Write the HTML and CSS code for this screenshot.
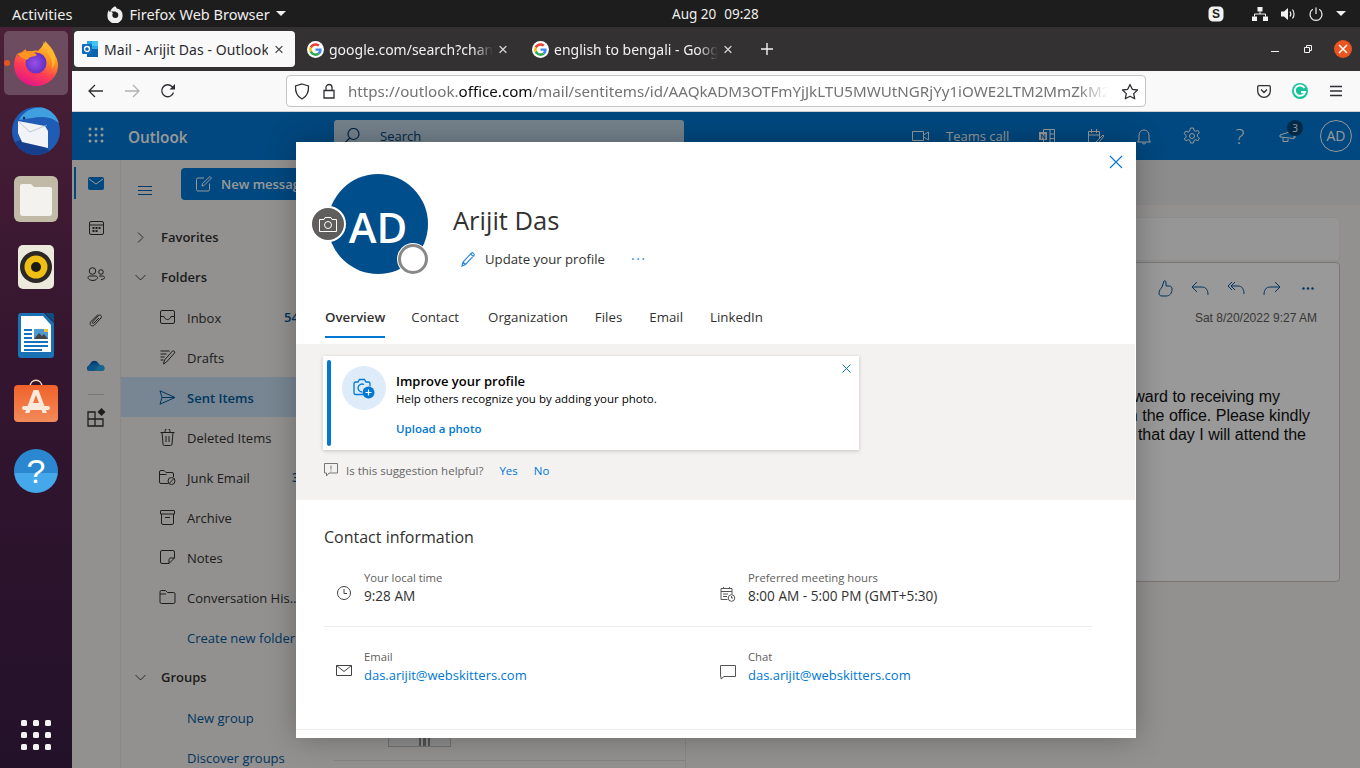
FILE: index.html
```html
<!DOCTYPE html>
<html lang="en">
<head>
<meta charset="utf-8">
<title>Mail - Arijit Das - Outlook</title>
<link rel="stylesheet" href="styles.css">
</head>
<body>
<svg class="defs" width="0" height="0" aria-hidden="true">
  <symbol id="google" viewBox="-8 -8 64 64">
    <circle cx="24" cy="24" r="32" fill="#fff"/>
    <path fill="#EA4335" d="M24 9.5c3.54 0 6.71 1.22 9.21 3.6l6.85-6.85C35.9 2.38 30.47 0 24 0 14.62 0 6.51 5.38 2.56 13.22l7.98 6.19C12.43 13.72 17.74 9.5 24 9.5z"/>
    <path fill="#4285F4" d="M46.98 24.55c0-1.57-.15-3.09-.38-4.55H24v9.02h12.94c-.58 2.96-2.26 5.48-4.78 7.18l7.73 6c4.51-4.18 7.09-10.36 7.09-17.65z"/>
    <path fill="#FBBC05" d="M10.53 28.59c-.48-1.45-.76-2.99-.76-4.59s.27-3.14.76-4.59l-7.98-6.19C.92 16.46 0 20.12 0 24c0 3.88.92 7.54 2.56 10.78l7.97-6.19z"/>
    <path fill="#34A853" d="M24 48c6.48 0 11.93-2.13 15.89-5.81l-7.73-6c-2.15 1.45-4.92 2.3-8.16 2.3-6.26 0-11.57-4.22-13.47-9.91l-7.98 6.19C6.51 42.62 14.62 48 24 48z"/>
  </symbol>
</svg>

<header class="topbar">
  <div class="top-left">
    <span>Activities</span>
    <span class="app-menu">
      <svg width="18" height="18" viewBox="0 0 18 18"><path fill="#eee" d="M9 1.2c1 .7 1.5 1.4 1.7 2.300 2.800.3 5.800 2.600 5.800 6.200a7.600 7.600 0 1 1-15 0c0-2 .6-3.600 1.500-4.700 0 1 .4 1.800 1.100 2.300C4.700 4.400 6.800 2.300 9 1.200z"/><circle cx="9.300" cy="10" r="3" fill="#1d1d1d"/><path fill="#1d1d1d" d="M5 6.500h5l-2 2.500z"/></svg>
      Firefox Web Browser
      <i class="caret"></i>
    </span>
  </div>
  <div class="clock"><span>Aug 20</span><span>09:28</span></div>
  <div class="tray">
    <svg width="16" height="16" viewBox="0 0 16 16"><path fill="#f2f2f2" d="M5 .5h6a4.500 4.500 0 0 1 4.500 4.500v6a4.500 4.500 0 0 1-4.500 4.500H5A4.500 4.500 0 0 1 .5 11V5A4.500 4.500 0 0 1 5 .5z"/><text x="8" y="12" text-anchor="middle" class="skype-s">S</text></svg>
    <svg class="tray-gap" width="16" height="14" viewBox="0 0 16 14"><path fill="#f2f2f2" d="M5.500 0h5v4.500h-5zM0 9.500h5V14H0zM11 9.500h5V14h-5z"/><path stroke="#f2f2f2" fill="none" d="M8 4.500v2.500M2.500 9.500V7h11v2.500"/></svg>
    <svg width="15" height="14" viewBox="0 0 15 14"><path fill="#f2f2f2" d="M0 4.500h3L7 1v12L3 9.500H0z"/><path stroke="#f2f2f2" fill="none" stroke-width="1.200" d="M9 4.500c1 1.500 1 3.500 0 5M11.500 2.500c2 2.500 2 6.500 0 9"/></svg>
    <svg width="14" height="14" viewBox="0 0 14 14"><path stroke="#f2f2f2" fill="none" stroke-width="1.200" d="M7 .5v6.500M3.800 2.300a6 6 0 1 0 6.400 0"/></svg>
    <i class="caret"></i>
  </div>
</header>

<div class="desktop">
  <nav class="dock">
    <div class="dock-item active">
      <i class="run-dot"></i>
      <svg width="48" height="48" viewBox="0 0 48 48">
        <defs>
          <linearGradient id="fx1" x1="0.800" y1="0" x2="0.350" y2="1"><stop offset="0" stop-color="#ffd53a"/><stop offset=".4" stop-color="#ff8a1f"/><stop offset=".68" stop-color="#ff3c55"/><stop offset="1" stop-color="#e31587"/></linearGradient>
          <radialGradient id="fx2" cx=".45" cy=".5" r=".6"><stop offset="0" stop-color="#9950e8"/><stop offset="1" stop-color="#5a2bbd"/></radialGradient>
        </defs>
        <path fill="url(#fx1)" d="M32 1c-.5 4 3 6 6 9 5 5 8 10 8 16 0 12-10 21-22 21S2 38 2 26c0-5 1.500-8 3-11l2 3c1-3 3-6 7-8 0 2 .5 3 1 4 4-2 8-3 11-2 3-3 6-6 6-11z"/>
        <circle cx="24" cy="24" r="10.500" fill="url(#fx2)"/>
        <path fill="#ffb52e" d="M33 2c4 4 8 8 10 14 1 5 0 10-3 14 1-6-1-12-4-16-2-3-4-6-3-12z"/>
        <path fill="#ff9420" d="M5 15c3-1 7-3 12-3 3 0 6 2 8 4-2 2-6 1-8 3l-2 2c-3-1-7-3-10-6z"/>
      </svg>
    </div>
    <div class="dock-item">
      <svg width="50" height="50" viewBox="0 0 50 50">
        <circle cx="25" cy="25" r="24" fill="#1f5cb5"/>
        <path fill="#3f9fe0" d="M8 14C12 5 24 0 33 2c7 2 13 8 15 15-5-4-10-6-16-6-9 0-16 2-24 3z"/>
        <path fill="#153f8c" d="M4 36c3 6 8 10 14 12 8 2 15 0 21-3l-8-6-19-6z"/>
        <path fill="#f1f3f7" d="M7 15l27 5 3 5v17L11 36l-4-9z"/>
        <path fill="none" stroke="#aab4c4" stroke-width=".700" d="M7 15l12 11 17-7"/>
        <circle cx="13" cy="12" r="1.200" fill="#0d2b5e"/>
      </svg>
    </div>
    <div class="dock-item">
      <svg width="44" height="46" viewBox="0 0 44 46">
        <rect width="44" height="46" rx="6" fill="#c1baa7"/>
        <path fill="#f4f2ee" d="M6 10a2 2 0 0 1 2-2h9l3 3h16a2 2 0 0 1 2 2v24a3 3 0 0 1-3 3H9a3 3 0 0 1-3-3z"/>
      </svg>
    </div>
    <div class="dock-item">
      <svg width="36" height="44" viewBox="0 0 36 44">
        <rect width="36" height="44" rx="5" fill="#ece9dd"/>
        <circle cx="18" cy="22" r="16" fill="#2b2925"/>
        <circle cx="18" cy="22" r="11.500" fill="#efbf16"/>
        <circle cx="18" cy="22" r="5" fill="#1b1a17"/>
      </svg>
    </div>
    <div class="dock-item">
      <svg width="36" height="45" viewBox="0 0 36 45">
        <path fill="#1a71b3" d="M3 0h23l10 10v32a3 3 0 0 1-3 3H3a3 3 0 0 1-3-3V3a3 3 0 0 1 3-3z"/>
        <path fill="#0d4f80" d="M27 0h7a2 2 0 0 1 2 2v7z"/>
        <path fill="#fff" d="M3 3h22l8 9v27H3z"/>
        <path fill="#1473ba" d="M6 16h8v2H6zM6 20h8v2H6zM6 24h8v2H6zM6 28h24v2H6zM6 32h24v2H6zM6 36h18v2H6z"/>
        <rect x="16" y="16" width="14" height="10" fill="#4d9bd0"/>
        <path fill="#444" d="M16 26l5-6 3 3 2-2 4 5z"/>
        <rect x="26" y="16" width="4" height="3" fill="#f4c430"/>
      </svg>
    </div>
    <div class="dock-item">
      <svg class="bag-icon" width="44" height="44" viewBox="0 2 44 44">
        <defs><linearGradient id="bag" x1="0" y1="0" x2="0" y2="1"><stop offset="0" stop-color="#f0622a"/><stop offset="1" stop-color="#f28a5a"/></linearGradient></defs>
        <path fill="none" stroke="#f3d9bd" stroke-width="1.500" d="M16 8c0-9 12-9 12 0"/>
        <rect y="6" width="44" height="37" rx="4" fill="url(#bag)"/>
        <path fill="#fbe9dc" d="M19.500 11h5L33 34h-4.500l-2-6h-9l-2 6H11zM19 24h6l-3-8z"/>
        <rect x="8" y="27" width="28" height="4" rx="2" fill="#fbe9dc"/>
      </svg>
    </div>
    <div class="dock-item">
      <div class="help-ball">?</div>
    </div>
    <div class="show-apps">
      <i></i><i></i><i></i><i></i><i></i><i></i><i></i><i></i><i></i>
    </div>
  </nav>

  <main class="browser">
    <div class="tabstrip">
      <div class="tab current">
        <svg width="16" height="16" viewBox="0 0 16 16"><rect x="5" y="0" width="11" height="16" fill="#28a8ea"/><rect x="5" y="8" width="11" height="8" fill="#0a64ad"/><rect x="10" y="0" width="6" height="5" fill="#50d9ff" opacity=".6"/><rect x="0" y="3" width="10" height="10" rx="1" fill="#0f6cbd"/><circle cx="5" cy="8" r="2.500" fill="none" stroke="#fff" stroke-width="1.300"/></svg>
        <span class="tab-label">Mail - Arijit Das - Outlook</span>
        <span class="tab-x">×</span>
      </div>
      <div class="tab">
        <svg width="17" height="17"><use href="#google"/></svg>
        <span class="tab-label fade">google.com/search?channel=fs</span>
        <span class="tab-x">×</span>
      </div>
      <div class="tab">
        <svg width="17" height="17"><use href="#google"/></svg>
        <span class="tab-label fade">english to bengali - Google Search</span>
        <span class="tab-x">×</span>
      </div>
      <svg class="new-tab" width="14" height="14" viewBox="0 0 14 14"><path stroke="#f2f2f2" stroke-width="1.400" d="M7 1v12M1 7h12"/></svg>
      <div class="win-controls">
        <i class="win-min"></i>
        <svg width="8" height="8" viewBox="0 0 8 8"><path fill="none" stroke="#f2f2f2" d="M.5 2.500h5v5h-5zM2.500 2.500v-2h5v5h-2"/></svg>
        <span class="win-close"><svg width="10" height="10" viewBox="0 0 10 10"><path stroke="#fff" stroke-width="1.500" d="M1 1l8 8M9 1l-8 8"/></svg></span>
      </div>
    </div>

    <div class="toolbar">
      <div class="nav-buttons">
        <svg width="16" height="14" viewBox="0 0 16 14"><path fill="none" stroke="#2f2f33" stroke-width="1.300" d="M15 7H1M7 1L1 7l6 6"/></svg>
        <svg width="16" height="14" viewBox="0 0 16 14"><path fill="none" stroke="#b1b1b3" stroke-width="1.300" d="M1 7h14M9 1l6 6-6 6"/></svg>
        <svg width="16" height="16" viewBox="0 0 16 16"><path fill="none" stroke="#2f2f33" stroke-width="1.300" d="M13.500 9.500A6 6 0 1 1 12 3.500l2 2"/><path fill="#2f2f33" d="M15 1v5.500H9.500z"/></svg>
      </div>
      <div class="urlbar">
        <svg width="16" height="17" viewBox="0 0 16 17"><path fill="none" stroke="#2f2f33" stroke-width="1.300" d="M8 1l6.500 2c.3 6-1.500 10.500-6.500 13C3 13.500 1.200 9 1.500 3z"/></svg>
        <svg width="12" height="16" viewBox="0 0 12 16"><path fill="none" stroke="#2f2f33" stroke-width="1.300" d="M1 7.500h10v7.500H1zM3 7.500V4.500a3 3 0 0 1 6 0v3"/></svg>
        <span class="url"><span class="url-dim">https://outlook.</span>office.com<span class="url-dim">/mail/sentitems/id/AAQkADM3OTFmYjJkLTU5MWUtNGRjYy1iOWE2LTM2MmZkM2Q5ZjM2NgAQ</span></span>
        <svg width="18" height="17" viewBox="0 0 18 17"><path fill="none" stroke="#2f2f33" stroke-width="1.300" stroke-linejoin="round" d="M9 1.500l2.300 4.800 5.200.7-3.800 3.600 1 5.200L9 13.200l-4.700 2.600 1-5.200L1.500 7l5.200-.7z"/></svg>
      </div>
      <div class="tool-icons">
        <svg width="14" height="13" viewBox="0 0 14 13"><path fill="none" stroke="#2f2f33" stroke-width="1.300" d="M2 .7h10A1.300 1.300 0 0 1 13.300 2v4a6.300 6.300 0 0 1-12.600 0V2A1.300 1.300 0 0 1 2 .7zM4 4.500L7 7.500l3-3"/></svg>
        <span class="grammarly"><svg width="16" height="16" viewBox="0 0 16 16"><path fill="none" stroke="#fff" stroke-width="2" d="M12.500 5A5.200 5.200 0 1 0 13 9H9"/></svg></span>
        <svg width="14" height="12" viewBox="0 0 14 12"><path stroke="#2f2f33" stroke-width="1.300" d="M1 1.500h12M1 6h12M1 10.500h12"/></svg>
      </div>
    </div>

    <div class="page">
      <div class="o-header">
        <div class="o-brand">
          <svg class="o-waffle" width="16" height="16" viewBox="0 0 16 16"><g fill="#fff"><circle cx="2" cy="2" r="1.500"/><circle cx="8" cy="2" r="1.500"/><circle cx="14" cy="2" r="1.500"/><circle cx="2" cy="8" r="1.500"/><circle cx="8" cy="8" r="1.500"/><circle cx="14" cy="8" r="1.500"/><circle cx="2" cy="14" r="1.500"/><circle cx="8" cy="14" r="1.500"/><circle cx="14" cy="14" r="1.500"/></g></svg>
          <span class="o-name">Outlook</span>
        </div>
        <div class="o-search">
          <svg width="16" height="16" viewBox="0 0 16 16"><path fill="none" stroke="#003a6c" stroke-width="1.200" d="M1 15l5-5.500M15 6a5.500 5.500 0 1 1-11 0 5.500 5.500 0 0 1 11 0z"/></svg>
          <span>Search</span>
        </div>
        <div class="o-actions">
          <svg class="o-teams" width="17" height="10" viewBox="0 0 17 10"><path fill="none" stroke="#fff" d="M.5.500h11v9H.5zM11.500 4l5-3v8l-5-3"/></svg>
          <span class="o-teams-label">Teams call</span>
          <svg class="o-ic" width="18" height="17" viewBox="0 0 18 17"><path fill="none" stroke="#fff" d="M4.500 1.500h11v14h-11zM11 1.500v14M11 6h4.500M11 10.500h4.500"/><rect y="4" width="8" height="8" fill="#fff"/><text x="4" y="11" text-anchor="middle" class="note-n">N</text></svg>
          <svg class="o-ic" width="18" height="17" viewBox="0 0 18 17"><path fill="none" stroke="#fff" d="M1.500 3.500h11v7M8 14.500H1.500zM1.500 3.500v11M1.500 7h11M4.500 1v4M9.500 1v4M9 14l7-7 1 1-6 7.500-3 .5z"/></svg>
          <svg class="o-ic" width="18" height="17" viewBox="0 0 18 17"><path fill="none" stroke="#fff" d="M4 12V7a5 5 0 0 1 10 0v5l1.500 2h-13zM7.500 14.500a1.500 1.500 0 0 0 3 0"/></svg>
          <svg class="o-ic" width="18" height="18" viewBox="0 0 18 18"><path fill="none" stroke="#fff" d="M7.500 1h3l.5 2.500 1.500.8 2.400-1 1.500 2.600-2 1.600v2l2 1.600-1.500 2.600-2.400-1-1.500.8-.5 2.500h-3l-.5-2.500-1.500-.8-2.400 1L1.100 11.900l2-1.600v-2l-2-1.600 1.500-2.600 2.400 1 1.500-.8z"/><circle cx="9" cy="9" r="2.500" fill="none" stroke="#fff"/></svg>
          <span class="o-ic o-q">?</span>
          <span class="o-ic o-mega">
            <svg width="17" height="13" viewBox="0 0 17 13"><path fill="none" stroke="#fff" d="M1 5l14-4.500v8L1 7zM4 7.500v4h5V9"/><path stroke="#fff" d="M16 1v7"/></svg>
            <b class="o-badge">3</b>
          </span>
          <span class="o-avatar">AD</span>
        </div>
      </div>

      <div class="o-body">
        <aside class="o-rail">
          <span class="rail-item on">
            <svg width="16" height="13" viewBox="0 0 16 13"><rect width="16" height="13" rx="2" fill="#0078d4"/><path fill="none" stroke="#fff" d="M1 2l7 5 7-5"/></svg>
          </span>
          <span class="rail-item">
            <svg width="15" height="14" viewBox="0 0 15 14"><path fill="none" stroke="#323130" d="M2 .5h11A1.500 1.500 0 0 1 14.500 2v10a1.500 1.500 0 0 1-1.500 1.500H2A1.500 1.500 0 0 1 .5 12V2A1.500 1.500 0 0 1 2 .5zM.5 4h14"/><path fill="#323130" d="M3.500 6h2v2h-2zM6.500 6h2v2h-2zM9.500 6h2v2h-2zM3.500 9h2v2h-2zM6.500 9h2v2h-2z"/></svg>
          </span>
          <span class="rail-item">
            <svg width="18" height="14" viewBox="0 0 18 14"><circle cx="5.500" cy="4" r="3.300" fill="none" stroke="#323130"/><circle cx="14" cy="5" r="2.300" fill="none" stroke="#323130"/><path fill="none" stroke="#323130" d="M1 10.500c0-1 1-1.500 2-1.500h5c1 0 2.500.5 2.500 1.500S9 13.500 6 13.500 1 12 1 10.500zM12 9h3.500c1 0 2 .5 2 1.500s-1 2-3.500 2"/></svg>
          </span>
          <span class="rail-item">
            <svg width="14" height="15" viewBox="0 0 14 15"><path fill="none" stroke="#323130" d="M9 1.500L2 8.500c-2.500 3 1 6 3.500 3.500l6.500-7c1.500-2-1-4-2.500-2.500L3.500 9c-.7 1 .5 2 1.500 1L10 5"/></svg>
          </span>
          <span class="rail-item">
            <svg width="18" height="12" viewBox="0 0 18 12"><path fill="#0364b8" d="M3 5a4.500 4.500 0 0 1 8-2.500L8 8 1 11C-.5 9-.5 6 3 5z"/><path fill="#0f78d4" d="M6 3.500a5 5 0 0 1 7 1.500c-3 0-5 2-5 3L2 5c1-1 2.500-1.500 4-1.500z"/><path fill="#1490df" d="M7 5.500c3-2 7-1 7.500 1L9 11H3.500C.5 11 0 8 1.500 6.500 3.500 5 5.500 5 7 5.500z"/><path fill="#28a8ea" d="M14 5a3.200 3.200 0 0 1 2 6H7c3-2 4-6 7-6z"/></svg>
          </span>
          <i class="rail-rule"></i>
          <span class="rail-item apps">
            <svg width="19" height="19" viewBox="0 0 19 19"><path fill="none" stroke="#323130" stroke-width="1.300" d="M1 4h7v7H1zM1 11h7v7H1zM8 11h8v7H8z"/><path fill="#323130" d="M14.500 0l4 4-4 4-4-4z"/></svg>
          </span>
        </aside>

        <section class="o-folders">
          <div class="fold-top">
            <span class="burger"><i></i><i></i><i></i></span>
            <span class="new-msg">
              <svg width="16" height="16" viewBox="0 0 16 16"><path fill="none" stroke="#fff" d="M8 2H2a1.500 1.500 0 0 0-1.500 1.500v10A1.500 1.500 0 0 0 2 15h10a1.500 1.500 0 0 0 1.500-1.500V7.500M6 10l.5-2.500L14 .5l1.500 1.500L8 9.500z"/></svg>
              New message
            </span>
          </div>
          <ul class="tree">
            <li class="head"><svg width="7" height="11" viewBox="0 0 7 11"><path fill="none" stroke="#444" d="M1 .5l5 5-5 5"/></svg>Favorites</li>
            <li class="head"><svg width="11" height="7" viewBox="0 0 11 7"><path fill="none" stroke="#444" d="M.5 1l5 5 5-5"/></svg>Folders</li>
            <li><svg width="15" height="14" viewBox="0 0 15 14"><path fill="none" stroke="#323130" d="M2 .5h11A1.500 1.500 0 0 1 14.500 2v10a1.500 1.500 0 0 1-1.500 1.500H2A1.500 1.500 0 0 1 .5 12V2A1.500 1.500 0 0 1 2 .5zM.5 6.500h3.500c.5 2 2 3 3.500 3s3-1 3.500-3h3.500"/></svg><span>Inbox</span><em class="count-inbox">54</em></li>
            <li><svg width="16" height="16" viewBox="0 0 16 16"><path fill="none" stroke="#323130" d="M1 2h9M1 5h6M1 8h4M1 11h3M4 15l1-4 8-9c1-1 3 1 2 2l-8 9z"/></svg><span>Drafts</span></li>
            <li class="sel"><svg width="17" height="15" viewBox="0 0 17 15"><path fill="none" stroke="#005a9e" d="M1 .8L16 7.500 1 14.200l2-6.700zM3 7.500h13"/></svg><span>Sent Items</span></li>
            <li><svg width="15" height="17" viewBox="0 0 15 17"><path fill="none" stroke="#323130" d="M.5 3.500h14M5 3.500V2a1.500 1.500 0 0 1 5 0v1.500M2 3.500l1 11.500a1.500 1.500 0 0 0 1.500 1.500h6A1.500 1.500 0 0 0 12 15l1-11.500M6 7v6M9 7v6"/></svg><span>Deleted Items</span></li>
            <li><svg width="17" height="15" viewBox="0 0 17 15"><path fill="none" stroke="#323130" d="M9 13.500H2A1.500 1.500 0 0 1 .5 12V2A1.500 1.500 0 0 1 2 .5h3l2 2h6A1.500 1.500 0 0 1 14.500 4v3M.5 4.500h7"/><circle cx="12.500" cy="11" r="3.500" fill="none" stroke="#323130"/><path stroke="#323130" d="M10 13.500L15 8.500"/></svg><span>Junk Email</span><em class="count-junk">3</em></li>
            <li><svg width="15" height="15" viewBox="0 0 15 15"><path fill="none" stroke="#323130" d="M1 .5h13a.5.5 0 0 1 .5.5v3h-14V1a.5.5 0 0 1 .5-.5zM1.500 4v9A1.500 1.500 0 0 0 3 14.500h9a1.500 1.500 0 0 0 1.500-1.500V4M5 7.500h5"/></svg><span>Archive</span></li>
            <li><svg width="15" height="14" viewBox="0 0 15 14"><path fill="none" stroke="#323130" d="M2 .5h11A1.500 1.500 0 0 1 14.500 2v6L9 13.500H2A1.500 1.500 0 0 1 .5 12V2A1.500 1.500 0 0 1 2 .5zM14.500 8H10.500A1.500 1.500 0 0 0 9 9.500v4"/></svg><span>Notes</span></li>
            <li><svg width="16" height="14" viewBox="0 0 16 14"><path fill="none" stroke="#323130" d="M2 .5h4l2 2h6A1.500 1.500 0 0 1 15.500 4v8a1.500 1.500 0 0 1-1.500 1.500H2A1.500 1.500 0 0 1 .5 12V2A1.500 1.500 0 0 1 2 .5zM.5 4h6"/></svg><span>Conversation His...</span></li>
            <li class="link"><span>Create new folder</span></li>
            <li class="head"><svg width="11" height="7" viewBox="0 0 11 7"><path fill="none" stroke="#444" d="M.5 1l5 5 5-5"/></svg>Groups</li>
            <li class="link"><span>New group</span></li>
            <li class="link"><span>Discover groups</span></li>
          </ul>
        </section>

        <section class="o-list">
          <div class="thumb"></div>
          <i class="list-rule"></i>
        </section>

        <section class="o-read">
          <div class="subject-card"></div>
          <div class="msg-card">
            <div class="msg-icons">
              <svg width="15" height="17" viewBox="0 0 15 17"><path fill="none" stroke="#005a9e" d="M6 1c1-.5 2 0 2 2v3h3c2 0 3 1 3 3 0 4-2 7-6 7H4c-2 0-3-1-3-3 0-3 2-4 3-6 1-2 1-4 2-6z"/></svg>
              <svg width="18" height="15" viewBox="0 0 18 15"><path fill="none" stroke="#005a9e" d="M6 1L1 6l5 5M1 6h10c4 0 6 3 6 8"/></svg>
              <svg width="18" height="15" viewBox="0 0 18 15"><path fill="none" stroke="#005a9e" d="M5 1L1 5l4 4M8 1L4 5l4 4M4 5h7c4 0 6 3 6 8"/></svg>
              <svg width="18" height="15" viewBox="0 0 18 15"><path fill="none" stroke="#005a9e" d="M12 1l5 5-5 5M17 6H7c-4 0-6 3-6 8"/></svg>
              <svg class="msg-more" width="12" height="3" viewBox="0 0 12 3"><g fill="#005a9e"><circle cx="1.500" cy="1.500" r="1.200"/><circle cx="6" cy="1.500" r="1.200"/><circle cx="10.500" cy="1.500" r="1.200"/></g></svg>
            </div>
            <div class="msg-date">Sat 8/20/2022 9:27 AM</div>
            <p class="msg-line l1">I am looking forward to receiving my</p>
            <p class="msg-line l2">work in the office. Please kindly</p>
            <p class="msg-line l3">on that day I will attend the</p>
          </div>
        </section>
      </div>

      <div class="dim"></div>
    </div>

    <div class="modal">
      <svg class="modal-x" width="14" height="14" viewBox="0 0 14 14"><path stroke="#0078d4" stroke-width="1.100" d="M1 1l12 12M13 1L1 13"/></svg>
      <div class="profile-head">
        <div class="avatar-wrap">
          <div class="avatar">AD</div>
          <div class="cam-badge">
            <svg width="18" height="15" viewBox="0 0 18 15"><path fill="none" stroke="#fff" d="M.5 2.500h4.500l1-2h6l1 2h4.500v12H.5z"/><circle cx="9" cy="8" r="3.500" fill="none" stroke="#fff"/></svg>
          </div>
          <div class="presence"></div>
        </div>
        <div class="who">
          <h1>Arijit Das</h1>
          <div class="who-actions">
            <svg width="16" height="16" viewBox="0 0 16 16"><path fill="none" stroke="#2b88d8" stroke-width="1.100" d="M1 15l1-4 8.500-9c1-1 3.500 1 2.500 2.500L4.500 13.500zM9.500 3l3 2.500M2 11l2.500 2.500"/></svg>
            <span>Update your profile</span>
            <span class="more">···</span>
          </div>
        </div>
      </div>
      <div class="tabs">
        <span class="on">Overview</span><span>Contact</span><span>Organization</span><span>Files</span><span>Email</span><span>LinkedIn</span>
      </div>
      <div class="suggest">
        <div class="sg-card">
          <i class="sg-bar"></i>
          <div class="sg-circle">
            <svg width="22" height="21" viewBox="0 0 22 21"><path fill="none" stroke="#0078d4" stroke-width="1.300" d="M1 5.500a1.500 1.500 0 0 1 1.500-1.500h2.500l1.500-2.500h5l1.500 2.500h2.500a1.500 1.500 0 0 1 1.500 1.500v3M10 16.500H2.500A1.500 1.500 0 0 1 1 15V5.500"/><path fill="none" stroke="#0078d4" stroke-width="1.300" d="M11 6.500a4 4 0 1 0-2 7.500"/><circle cx="15.500" cy="14.500" r="6" fill="#0078d4"/><path stroke="#fff" stroke-width="1.200" d="M15.500 11.500v6M12.500 14.500h6"/></svg>
          </div>
          <div class="sg-text">
            <strong>Improve your profile</strong>
            <span>Help others recognize you by adding your photo.</span>
            <a>Upload a photo</a>
          </div>
          <svg class="sg-x" width="9" height="9" viewBox="0 0 9 9"><path stroke="#0078d4" d="M.5.500l8 8M8.500.500l-8 8"/></svg>
        </div>
        <div class="sg-foot">
          <svg width="14" height="14" viewBox="0 0 14 14"><path fill="none" stroke="#777" d="M.5.500h13v9.500H5L2.500 13v-3h-2zM7 2.500v4M7 7.500v1"/></svg>
          <span class="q">Is this suggestion helpful?</span>
          <a>Yes</a><a>No</a>
        </div>
      </div>
      <div class="contact">
        <h2>Contact information</h2>
        <div class="c-grid">
          <div class="c-item">
            <svg width="14" height="14" viewBox="0 0 14 14"><circle cx="7" cy="7" r="6.500" fill="none" stroke="#444"/><path fill="none" stroke="#444" d="M7 3v4.500h3"/></svg>
            <div><small>Your local time</small><b>9:28 AM</b></div>
          </div>
          <div class="c-item">
            <svg width="15" height="16" viewBox="0 0 15 16"><path fill="none" stroke="#555" d="M.5 2.500h11v6M7 13.500H.5v-11M.5 5.500h11M3 1v2M9 1v2M2.500 8h5M2.500 10.500h4"/><circle cx="11" cy="12" r="3.300" fill="#fff" stroke="#555"/><path fill="none" stroke="#555" d="M11 10v2h1.500"/></svg>
            <div><small>Preferred meeting hours</small><b>8:00 AM - 5:00 PM (GMT+5:30)</b></div>
          </div>
          <i class="c-rule"></i>
          <div class="c-item">
            <svg width="16" height="11" viewBox="0 0 16 11"><path fill="none" stroke="#444" d="M.5.500h15v10H.5zM.5.500L8 6.500l7.500-6"/></svg>
            <div><small>Email</small><a>das.arijit@webskitters.com</a></div>
          </div>
          <div class="c-item">
            <svg width="16" height="15" viewBox="0 0 16 15"><path fill="none" stroke="#555" d="M.5.500h15v11H4l-3 2.500v-2.500H.5z"/></svg>
            <div><small>Chat</small><a>das.arijit@webskitters.com</a></div>
          </div>
        </div>
      </div>
      <div class="modal-end"></div>
    </div>
  </main>
</div>
</body>
</html>
```

FILE: styles.css
```css
* { box-sizing: border-box; }
html, body { margin: 0; height: 100%; }
body {
  width: 1360px;
  height: 768px;
  overflow: hidden;
  font-family: "Open Sans", "Noto Sans", sans-serif;
  background: #300a24;
}
.defs { position: absolute; }
ul { list-style: none; margin: 0; padding: 0; }
h1, h2, p { margin: 0; font-weight: 400; }
em, i { font-style: normal; }

/* ---------- GNOME top bar ---------- */
.topbar {
  height: 27px;
  background: #1d1d1d;
  color: #eeeeec;
  font-family: "Noto Sans", sans-serif;
  font-size: 14.500px;
  display: grid;
  grid-template-columns: 660px auto 1fr;
  align-items: center;
  padding: 0 12px;
}
.top-left { display: flex; align-items: center; gap: 34px; }
.app-menu { display: flex; align-items: center; gap: 5px; }
.caret {
  display: inline-block;
  width: 0; height: 0;
  border-left: 5px solid transparent;
  border-right: 5px solid transparent;
  border-top: 5px solid #eee;
}
.app-menu .caret { margin-left: 1px; }
.clock { display: flex; gap: 8px; font-size: 13.500px; }
.tray { display: flex; align-items: center; justify-content: flex-end; gap: 13px; padding-right: 2px; }
.tray-gap { margin-left: 15px; }
.skype-s { font: 700 12px "Liberation Sans", sans-serif; fill: #1d1d1d; }

/* ---------- Dock ---------- */
.desktop { display: flex; height: 741px; position: relative; }
.dock {
  width: 72px;
  flex: none;
  background: linear-gradient(180deg, #4a2037 0%, #34152f 45%, #23112a 100%);
  display: flex;
  flex-direction: column;
  align-items: center;
  padding-top: 4px;
}
.dock-item {
  width: 64px;
  height: 64px;
  margin-bottom: 4px;
  flex: none;
  display: flex;
  align-items: center;
  justify-content: center;
  border-radius: 5px;
  position: relative;
}
.dock-item.active { background: rgba(255, 255, 255, .2); }
.bag-icon { overflow: visible; }
.run-dot {
  position: absolute;
  left: 0; top: 29px;
  width: 6px; height: 6px;
  border-radius: 50%;
  background: #e95420;
}
.help-ball {
  width: 44px; height: 44px;
  border-radius: 50%;
  background: linear-gradient(180deg, #2a87d0 0 55%, #45a8ea 55%);
  color: #fff;
  font: 400 34px/44px "Liberation Sans", sans-serif;
  text-align: center;
}
.show-apps {
  margin-top: auto;
  margin-bottom: 18px;
  display: grid;
  grid-template-columns: repeat(3, 6px);
  grid-auto-rows: 6px;
  gap: 6px;
}
.show-apps i { background: #f4f2f2; border-radius: 1.500px; }

/* ---------- Browser chrome ---------- */
.browser { flex: 1; min-width: 0; display: flex; flex-direction: column; }
.tabstrip {
  height: 44px;
  background: #333132;
  display: flex;
  align-items: center;
  padding: 0 0 0 2px;
  color: #f2f2f2;
  font-family: "Noto Sans", sans-serif;
  font-size: 14px;
}
.tab {
  width: 225px;
  height: 36px;
  display: flex;
  align-items: center;
  gap: 5px;
  padding: 0 16px 0 8px;
  border-radius: 4px;
}
.tab.current { width: 221px; background: #f9f9fa; color: #2a2a2e; margin-right: 4px; padding-right: 11px; gap: 6px; }
.tab-label { flex: 1; min-width: 0; white-space: nowrap; overflow: hidden; }
.tab.current .tab-label { letter-spacing: .07px; }
.tab-label.fade { -webkit-mask-image: linear-gradient(90deg, #000 88%, transparent); mask-image: linear-gradient(90deg, #000 88%, transparent); }
.tab-x { font: 300 17px/1 "Liberation Sans", sans-serif; opacity: .85; }
.new-tab { margin-left: 11px; }
.win-controls { margin-left: auto; display: flex; align-items: center; gap: 22px; padding-right: 8px; }
.win-min { width: 8px; height: 1.500px; background: #f2f2f2; margin-top: 5px; margin-right: 3px; }
.win-close {
  width: 18px; height: 18px; border-radius: 50%;
  background: #e95420;
  display: flex; align-items: center; justify-content: center;
}
.toolbar {
  height: 41px;
  background: #f9f9fa;
  border-bottom: 1px solid #cfcfd1;
  display: flex;
  align-items: center;
}
.nav-buttons { display: flex; align-items: center; gap: 20px; padding-left: 16px; width: 214px; }
.urlbar {
  width: 860px;
  height: 32px;
  background: #fff;
  border: 1px solid #c4c4c6;
  border-radius: 4px;
  display: flex;
  align-items: center;
  padding: 0 6px 0 7px;
  gap: 13px;
}
.url {
  flex: 1; min-width: 0;
  white-space: nowrap;
  overflow: hidden;
  font-family: "Noto Sans", sans-serif;
  font-size: 15.150px;
  color: #0c0c0d;
  -webkit-mask-image: linear-gradient(90deg, #000 96%, transparent);
  mask-image: linear-gradient(90deg, #000 96%, transparent);
}
.url-dim { color: #737373; }
.tool-icons { display: flex; align-items: center; gap: 21px; padding-left: 111px; }
.grammarly {
  width: 16px; height: 16px; border-radius: 50%;
  background: #15c39a; display: flex;
}

/* ---------- Outlook page (behind the dialog) ---------- */
.page { flex: 1; min-height: 0; position: relative; overflow: hidden; background: #f3f2f1; display: flex; flex-direction: column; }
.dim { position: absolute; inset: 0; background: rgba(0, 0, 0, .4); }
.o-header {
  height: 48px;
  flex: none;
  background: #0078d4;
  color: #fff;
  display: flex;
  align-items: center;
}
.o-brand { width: 262px; display: flex; align-items: center; gap: 24px; padding-left: 16px; }
.o-waffle { margin-top: -2px; }
.o-name { font-size: 15.300px; font-weight: 600; padding-top: 2px; }
.o-search {
  width: 350px;
  height: 32px;
  align-self: flex-end;
  margin-bottom: 8px;
  background: #c3d9ea;
  border-radius: 3px;
  display: flex;
  align-items: center;
  gap: 20px;
  padding-left: 10px;
  color: #004578;
  font-size: 13px;
}
.o-actions { flex: 1; display: flex; align-items: center; padding-left: 228px; }
.o-teams-label { font-size: 13px; margin-left: 17px; margin-right: 31px; width: 62px; white-space: nowrap; }
.o-ic { margin-right: 30px; flex: none; }
.o-q { font: 300 21px/1 "Open Sans", sans-serif; width: 18px; text-align: center; }
.o-mega { position: relative; display: flex; width: 18px; margin-right: 23px; }
.o-badge {
  position: absolute; left: 8px; top: -10px;
  width: 16px; height: 16px; border-radius: 50%;
  background: #004578; color: #fff;
  font: 400 10px/16px "Open Sans", sans-serif; text-align: center;
}
.o-avatar {
  width: 32px; height: 32px; border-radius: 50%;
  border: 1px solid #fff; font-size: 14px; line-height: 30px; text-align: center;
  flex: none;
}
.note-n { font: 700 7px "Liberation Sans", sans-serif; fill: #0078d4; }
.o-body { flex: 1; min-height: 0; display: flex; }
.o-rail {
  width: 49px; flex: none;
  border-right: 1px solid #e6e5e4;
  display: flex; flex-direction: column; align-items: center;
}
.rail-item { height: 46px; width: 100%; display: flex; align-items: center; justify-content: center; flex: none; position: relative; }
.rail-item.on { height: 45px; padding-top: 1px; }
.rail-item.on + .rail-item { margin-top: 0; }
.rail-item.on::before {
  content: "";
  position: absolute; left: 2px; top: 7px; bottom: 6px; width: 2px;
  background: #0078d4;
}
.rail-rule { width: 16px; height: 1px; background: #c8c6c4; margin: 5px 0 0; flex: none; }
.rail-item.apps { margin-top: -1px; }
.o-folders { width: 213px; flex: none; overflow: hidden; }
.fold-top { height: 57px; display: flex; align-items: center; padding-left: 17px; }
.burger { width: 14px; display: flex; flex-direction: column; gap: 3px; margin-right: 29px; margin-top: 3px; }
.burger i { height: 1px; background: #005a9e; }
.new-msg {
  width: 130px; height: 32px;
  margin-top: -9px;
  background: #0078d4;
  color: #fff;
  border-radius: 4px;
  display: flex; align-items: center;
  gap: 9px;
  padding-left: 15px;
  font-size: 13px;
  font-weight: 600;
  white-space: nowrap;
  overflow: hidden;
  flex: none;
}
.tree li {
  height: 40px;
  display: flex;
  align-items: center;
  font-size: 13px;
  color: #323130;
  white-space: nowrap;
  padding-left: 38px;
  position: relative;
}
.tree li > span { margin-top: 2px; }
.tree li > svg { flex: none; margin-right: 11px; width: 17px; }
.tree li.head { font-weight: 600; padding-left: 14px; }
.tree li.head > svg { margin-right: 15px; width: 11px; }
.tree li.link { color: #005a9e; padding-left: 66px; }
.tree li.sel { background: #c7e0f4; color: #005a9e; font-weight: 600; }
.tree em { color: #005a9e; font-weight: 600; position: absolute; }
.count-inbox { left: 163px; }
.count-junk { left: 171px; color: #323130; }
.o-list {
  width: 352px; flex: none;
  border-right: 1px solid #e1dfdd;
  background: #f3f2f1;
  padding: 578px 0 0 54px;
}
.thumb {
  width: 63px; height: 9px;
  background: linear-gradient(90deg, transparent 50%, #8a8a8a 50% 52%, transparent 52% 56%, #8a8a8a 56% 60%, transparent 60% 64%, #8a8a8a 64% 68%, transparent 68%), #e9e9e9;
  border: 1px solid #bdbdbd;
  border-top: 0;
  margin-bottom: 13px;
}
.list-rule { display: block; height: 1px; margin-left: -54px; background: #dddbd9; }
.o-read {
  flex: 1; min-width: 0;
  padding: 57px 20px 0 0;
  background: linear-gradient(#ebeae9 0 45px, #f3f2f1 45px);
}
.subject-card {
  height: 44px;
  background: #fafafa;
  border: 1px solid #edebe9;
  border-radius: 4px 4px 0 0;
  margin-bottom: 1px;
}
.msg-card {
  height: 320px;
  background: #fff;
  border: 1px solid #c8c6c4;
  border-radius: 4px;
  padding-top: 16px;
}
.msg-icons { display: flex; align-items: center; justify-content: flex-end; gap: 18px; padding-right: 25px; height: 18px; }
.msg-more { margin-left: 3px; }
.msg-date {
  font: 400 12px "Liberation Sans", sans-serif;
  color: #605e5c;
  text-align: right;
  padding-right: 22px;
  margin-top: 14px;
  margin-bottom: 62px;
}
.msg-line { font: 400 16px/19px "Liberation Sans", sans-serif; color: #111; text-align: right; white-space: nowrap; }
.l1 { padding-right: 59px; }
.l2 { padding-right: 29px; }
.l3 { padding-right: 33px; }

/* ---------- Profile dialog ---------- */
.modal {
  position: absolute;
  left: 296px;
  top: 115px;
  width: 840px;
  height: 596px;
  background: #fff;
  box-shadow: 0 0 28px rgba(0, 0, 0, .28);
  color: #323130;
  display: flex;
  flex-direction: column;
  padding: 0 1px 0 0;
}
.modal-x { position: absolute; right: 13px; top: 13px; }
.profile-head { height: 148px; flex: none; display: flex; padding: 32px 0 0 32px; }
.avatar-wrap { width: 100px; height: 100px; position: relative; flex: none; }
.avatar {
  width: 100px; height: 100px; border-radius: 50%;
  background: #004e8c; color: #fff;
  font-size: 42px; font-weight: 600;
  line-height: 106px; text-align: center;
}
.cam-badge {
  position: absolute; left: -18px; top: 32px;
  width: 36px; height: 36px; border-radius: 50%;
  background: #605e5c;
  border: 2px solid #fff;
  display: flex; align-items: center; justify-content: center;
}
.presence {
  position: absolute; right: 0; top: 70px;
  width: 30px; height: 30px; border-radius: 50%;
  background: #fff;
  border: 3px solid #8a8886;
  box-shadow: 0 0 0 1px #fff;
}
.who { padding: 28px 0 0 25px; }
.who h1 { font-size: 25.500px; line-height: 36px; color: #323130; }
.who-actions { display: flex; align-items: center; margin: 11px 0 0 8px; font-size: 13.200px; line-height: 20px; }
.who-actions svg { margin-right: 8px; }
.more { color: #2b88d8; margin-left: 26px; font-size: 14px; letter-spacing: 1.500px; }
.tabs { height: 48px; margin-bottom: 6px; padding-top: 6px; flex: none; display: flex; padding-left: 29px; align-items: stretch; font-size: 13.300px; }
.tabs span { display: flex; align-items: center; margin-right: 27px; white-space: nowrap; }
.tabs span.on { font-weight: 600; box-shadow: inset 0 -2px 0 #0078d4; margin-right: 26px; }
.tabs span:nth-child(2) { margin-right: 29px; }
.suggest { height: 156px; flex: none; background: #f3f2f1; padding: 12px 0 0 27px; }
.sg-card {
  width: 536px; height: 94px;
  background: #fff;
  box-shadow: 0 1px 4px rgba(0, 0, 0, .2);
  display: flex;
  position: relative;
  padding: 10px 0 0 4px;
}
.sg-bar { position: absolute; left: 4px; top: 4px; bottom: 4px; width: 4px; border-radius: 2px; background: #0078d4; }
.sg-circle {
  width: 44px; height: 44px; border-radius: 50%;
  background: #deecf9;
  margin-left: 15px;
  display: flex; align-items: center; justify-content: center;
  flex: none;
}
.sg-text { display: flex; flex-direction: column; padding-left: 10px; color: #000; }
.sg-text strong { font-size: 13px; font-weight: 600; line-height: 30px; height: 25px; }
.sg-text span { font-size: 11.500px; line-height: 16px; }
.sg-text a { font-size: 11.500px; font-weight: 600; color: #0078d4; margin-top: 14px; line-height: 16px; }
.sg-x { position: absolute; right: 8px; top: 8px; }
.sg-foot { display: flex; align-items: center; font-size: 11.500px; height: 20px; margin-top: 10px; color: #666; }
.sg-foot .q { margin-left: 8px; margin-right: 16px; }
.sg-foot svg { margin-left: 1px; }
.sg-foot a { color: #0078d4; margin-right: 16px; }
.contact { flex: 1; padding: 24px 43px 0 28px; }
.contact h2 { font-size: 16px; line-height: 26px; color: #323130; }
.c-grid { display: grid; grid-template-columns: 384px 1fr; margin-top: 20px; }
.c-item { display: flex; height: 56px; padding-left: 12px; align-items: flex-start; }
.c-item > svg { flex: none; margin: 16px 12px 0 0; width: 16px; }
.c-item small, .c-item b, .c-item a { display: block; white-space: nowrap; }
.c-item small { font-size: 11.300px; line-height: 16px; color: #605e5c; }
.c-item b { font-size: 13.600px; font-weight: 400; line-height: 20px; color: #323130; }
.c-item a { font-size: 13px; line-height: 20px; color: #0078d4; }
.c-rule { grid-column: 1 / -1; height: 1px; background: #edebe9; margin: 0 0 22px; }
.modal-end { height: 9px; flex: none; border-top: 1px solid #edebe9; }
```
